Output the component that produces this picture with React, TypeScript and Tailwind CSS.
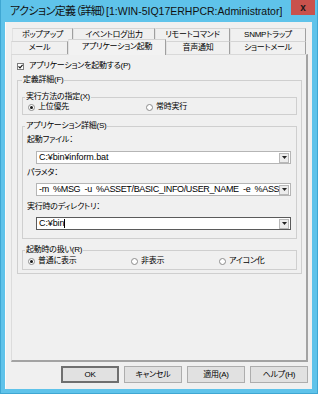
import React from "react";

const JP = "text-[8px] tracking-[-0.25px]";

const Radio = ({ checked, label, w }: { checked?: boolean; label: string; w?: string }) => (
  <div className={`flex items-center h-[10px] ${w ?? ""}`}>
    <span className="w-[7px] h-[7px] shrink-0 rounded-full border border-[#8c8c8c] bg-white flex items-center justify-center">
      {checked && <span className="w-[3px] h-[3px] rounded-full bg-[#1a1a1a]" />}
    </span>
    <span className={`ml-[3px] whitespace-nowrap ${JP}`}>{label}</span>
  </div>
);

const Combo = ({ text, focused, caret, tight }: { text: string; focused?: boolean; caret?: boolean; tight?: boolean }) => (
  <div
    className={`ml-[13px] w-[255px] h-[13px] bg-white border flex items-center ${
      focused ? "border-[#5a5a5a]" : "border-[#b5b5b5]"
    }`}
  >
    <div
      className={`flex-1 min-w-0 overflow-hidden whitespace-pre pl-[2px] leading-[11px] flex items-center ${
        tight ? "tracking-[-0.35px]" : "tracking-[-0.1px]"
      }`}
    >
      <span>{text}</span>
      {caret && <span className="w-px h-[9px] bg-black" />}
    </div>
    <div className="w-[10px] h-[10px] mr-[1px] shrink-0 bg-[#ececec] border border-[#b8b8b8] flex items-center justify-center">
      <svg width="5" height="3" viewBox="0 0 5 3">
        <path d="M0 0H5L2.5 3Z" fill="#222" />
      </svg>
    </div>
  </div>
);

const Tab = ({ label, w, active }: { label: string; w: string; active?: boolean }) => (
  <div
    className={`${w} flex items-center justify-center whitespace-nowrap border-t border-l border-t-[#d4d4d4] border-l-[#e2e2e2] border-r border-r-[#9f9f9f] ${JP} ${
      active ? "relative z-10 h-[16px] -mt-[2px] -mb-[1px] bg-[#f2f2f2] pb-[2px]" : "h-[13px] bg-[#f0f0f0]"
    }`}
  >
    {label}
  </div>
);

const Btn = ({ label, def }: { label: string; def?: boolean }) => (
  <div
    className={`w-[58px] h-[17px] flex items-center justify-center bg-[#e1e1e1] ${JP} ${
      def ? "border-[2px] border-[#6f6f6f]" : "border border-[#adadad]"
    }`}
  >
    {label}
  </div>
);

export default function App() {
  return (
    <div className="w-[318px] h-[394px] bg-[#5fc3ea] flex flex-col font-['Liberation_Sans','Noto_Sans_CJK_JP',sans-serif] [font-feature-settings:'palt'] text-[9px] leading-[10px] text-black border-l border-r border-b border-[#3fa7d3]">
      {/* Title bar */}
      <div className="h-[22px] flex items-start shrink-0">
        <div className="pl-[9px] pt-[5px] leading-[13px] whitespace-nowrap text-[#111] min-w-0 overflow-hidden">
          <span className="text-[11px] tracking-[-0.6px]">アクション定義（詳細）</span>
          <span className="text-[10.5px]">[1:WIN-5IQ17ERHPCR:Administrator]</span>
        </div>
        <div className="ml-auto mr-[2px] w-[24px] h-[15px] shrink-0 bg-[#c9524c] flex items-center justify-center text-[10px] font-bold leading-[10px] text-[#1a1a1a]">
          x
        </div>
      </div>

      {/* Client */}
      <div className="ml-[4px] mr-[5px] mb-[4px] flex-1 bg-[#f0f0f0] border-l border-[#fbfbfb] flex flex-col">
        {/* Tabs */}
        <div className="mt-[6px] ml-[6px] flex">
          <Tab label="ポップアップ" w="w-[61px]" />
          <Tab label="イベントログ出力" w="w-[82px]" />
          <Tab label="リモートコマンド" w="w-[75px]" />
          <Tab label="SNMPトラップ" w="w-[76px]" />
        </div>
        <div className="ml-[5px] flex items-end">
          <Tab label="メール" w="w-[57px]" />
          <Tab label="アプリケーション起動" w="w-[98px]" active />
          <Tab label="音声通知" w="w-[64px]" />
          <Tab label="ショートメール" w="w-[76px]" />
        </div>

        {/* Panel */}
        <div className="ml-[5px] w-[297px] h-[308px] border-t border-l border-t-[#d9d9d9] border-l-[#dcdcdc] border-r-[2px] border-b-[2px] border-r-[#a3a3a3] border-b-[#a3a3a3] flex flex-col">
          <div className="mt-[6px] ml-[5px] h-[10px] flex items-center">
            <span className="w-[7px] h-[7px] border border-[#7d7d7d] bg-white flex items-center justify-center">
              <svg width="5" height="5" viewBox="0 0 5 5">
                <path d="M0.5 2.4L2 3.9L4.6 0.8" stroke="#111" strokeWidth="1.1" fill="none" />
              </svg>
            </span>
            <span className={`ml-[5px] ${JP}`}>アプリケーションを起動する(P)</span>
          </div>

          {/* 定義詳細 */}
          <fieldset className="mt-[4px] ml-[5px] w-[285px] border border-[#cfcfcf] pb-[3px] flex flex-col">
            <legend className={`ml-[4px] px-[1px] h-[10px] leading-[10px] ${JP}`}>定義詳細(F)</legend>

            <fieldset className="mt-[7px] ml-[4px] w-[275px] border border-[#cfcfcf] pb-[2px]">
              <legend className={`ml-[2px] px-[1px] h-[10px] leading-[10px] ${JP}`}>実行方法の指定(X)</legend>
              <div className="flex ml-[5px]">
                <Radio checked label="上位優先" w="w-[118px]" />
                <Radio label="常時実行" />
              </div>
            </fieldset>

            <fieldset className="mt-[6px] ml-[4px] w-[275px] border border-[#cfcfcf] pb-[8px] flex flex-col">
              <legend className={`ml-[2px] px-[1px] h-[10px] leading-[10px] ${JP}`}>アプリケーション詳細(S)</legend>
              <div className={`mt-[4px] ml-[4px] h-[10px] ${JP}`}>起動ファイル：</div>
              <div className="mt-[6px]">
                <Combo text="C:¥bin¥inform.bat" />
              </div>
              <div className={`mt-[4px] ml-[4px] h-[10px] ${JP}`}>パラメタ：</div>
              <div className="mt-[5px]">
                <Combo tight text="-m  %MSG  -u  %ASSET/BASIC_INFO/USER_NAME  -e  %ASSET/BASIC_INFO/MAIL_ADDRESS" />
              </div>
              <div className={`mt-[6px] ml-[4px] h-[10px] ${JP}`}>実行時のディレクトリ：</div>
              <div className="mt-[5px]">
                <Combo text="C:¥bin" focused caret />
              </div>
            </fieldset>

            <fieldset className="mt-[6px] ml-[4px] w-[275px] border border-[#cfcfcf] pb-[3px]">
              <legend className={`ml-[2px] px-[1px] h-[10px] leading-[10px] ${JP}`}>起動時の扱い(R)</legend>
              <div className="mt-[1px] flex ml-[5px]">
                <Radio checked label="普通に表示" w="w-[103px]" />
                <Radio label="非表示" w="w-[88px]" />
                <Radio label="アイコン化" />
              </div>
            </fieldset>
          </fieldset>
        </div>

        {/* Buttons */}
        <div className="mt-[4px] pr-[4px] flex justify-end gap-[5px]">
          <Btn label="OK" def />
          <Btn label="キャンセル" />
          <Btn label="適用(A)" />
          <Btn label="ヘルプ(H)" />
        </div>
      </div>
    </div>
  );
}
